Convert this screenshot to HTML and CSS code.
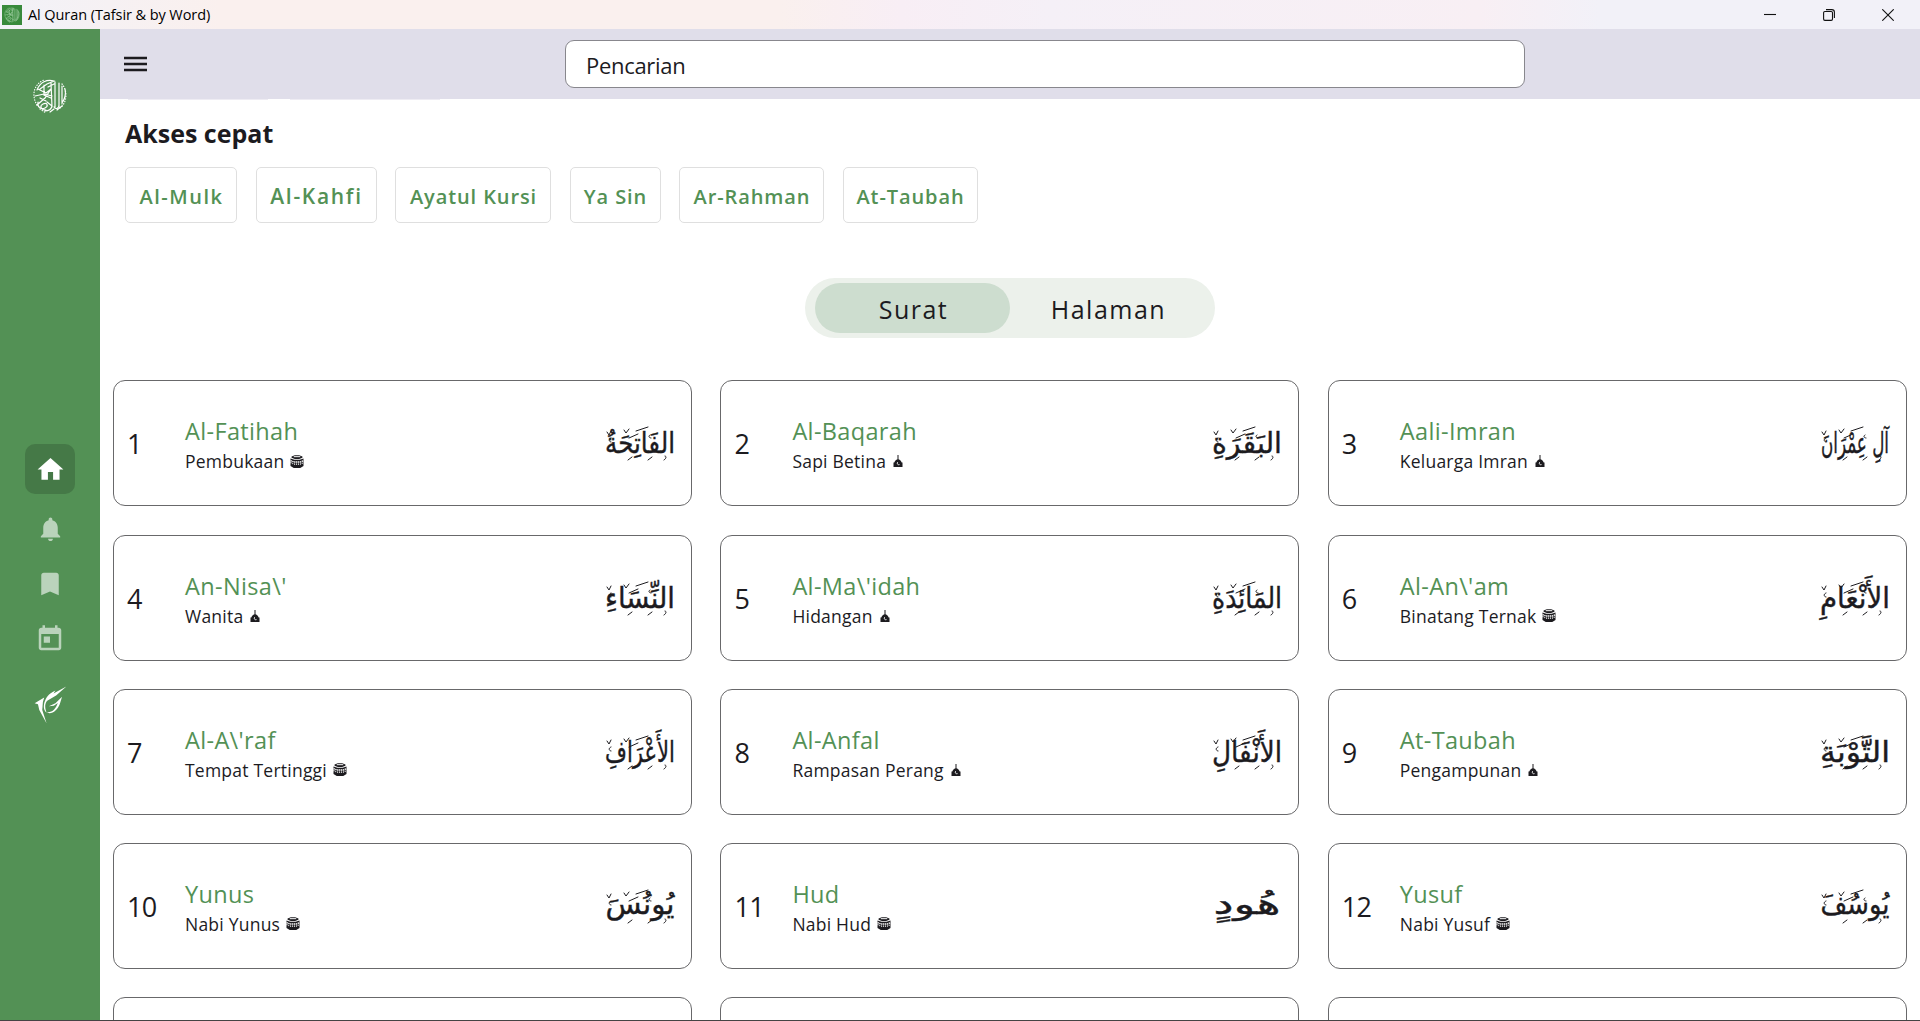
FILE: index.html
```html
<!DOCTYPE html>
<html lang="id">
<head>
<meta charset="utf-8">
<title>Al Quran (Tafsir &amp; by Word)</title>
<link rel="stylesheet" href="styles.css">
</head>
<body>
<svg class="defs" aria-hidden="true">
  <symbol id="kaaba" viewBox="0 0 12 12">
    <path fill="#1c1b1f" d="M1 1.300 4 .2h4l3 1.100v1.200L8 3.600H4L1 2.500z"/>
    <path fill="#fff" d="M3 1.100h6v.9H3z"/>
    <path fill="#1c1b1f" d="M0 3.200l3.500 1.200h5L12 3.200v7L9 12H3L0 10.200z"/>
    <path stroke="#fff" fill="none" stroke-width="1.300" stroke-dasharray="1.300 .5" d="M0 5.200 3 6.500h6l3-1.300"/>
    <path stroke="#fff" fill="none" stroke-width="1" stroke-dasharray="1 .8" d="M0 7 3 8.400h6l3-1.400"/>
  </symbol>
  <symbol id="dome" viewBox="0 0 9 12">
    <path fill="#1c1b1f" d="M4 0h1v4.300c1.600.8 2.700 1.600 3.200 3.200H9V12H0V7.500h.8C1.300 6 2.400 5 4 4.300z"/>
    <path stroke="#fff" fill="none" stroke-width=".9" d="M4.100 7.200c-.9 1.500.2 3 1.900 2.400"/>
  </symbol>
  <symbol id="calligraphy" viewBox="0 0 36 36">
    <g fill="none" stroke="currentColor" stroke-linecap="round" stroke-width="1.200">
      <path d="M5 12C8 4 15 1 22 3l-7 3-7 5M6 11l8 4 5-4-6 9-8 7M12 7v10l7 3M3 18l9-2 8 2M19 5l1 24M23 4v25M27 5v24M30 8v18M33 11c1 5 0 10-3 14M6 24c-1 5 3 8 7 6s2-6-2-4-2 6 3 6M15 24l5 4c-1 4-4 5-7 5M22 29c2 3 5 1 5-2M18 34l4-3M8 20l6 3M30 28l-5 4M16 9l6-3"/>
      <path stroke-dasharray=".4 2.200" d="M5 27C-1 17 2 6 12 2M30 6c6 7 5 19-2 24M8 31l6 4"/>
    </g>
  </symbol>
  <!-- small vowel and ornament marks around the surah names -->
  <symbol id="marks" viewBox="0 0 72 48">
    <g fill="none" stroke="#1c1b1f" stroke-width="1" stroke-linecap="round">
      <path d="M3 13l2 3 2-4M20 11l2 3 3-4M7 19c-3 1-2 4 0 4M32 12l12-4M25 19l9-4M46 16c-2 1-1 3 1 3M28 38l-4 3M48 38l-4 3M61 37c2 0 1 3-1 4"/>
    </g>
  </symbol>
</svg>
<div class="titlebar">
  <span class="app-icon"><svg viewBox="0 0 36 36"><use href="#calligraphy"/></svg></span>
  <span class="app-name">Al Quran (Tafsir &amp; by Word)</span>
  <div class="window-buttons">
    <svg viewBox="0 0 12 12"><path d="M0 5.500h12"/></svg>
    <svg viewBox="0 0 12 12"><rect x=".6" y="2.500" width="8.900" height="8.900" rx="1.300"/><path d="M3 .6h5.800a2.600 2.600 0 0 1 2.600 2.600V9"/></svg>
    <svg viewBox="0 0 12 12"><path d="M.3.3l11.400 11.400M11.700.3.3 11.700"/></svg>
  </div>
</div>
<div class="app">
  <nav class="sidebar">
    <svg class="brand" viewBox="0 0 36 36"><use href="#calligraphy"/></svg>
    <div class="nav-item active"><svg viewBox="0 0 24 24"><path d="M10 20v-6h4v6h5v-8h3L12 3 2 12h3v8z"/></svg></div>
    <div class="nav-item bell"><svg viewBox="0 0 24 24"><path d="M12 22c1.100 0 2-.9 2-2h-4c0 1.100.9 2 2 2zm6-6v-5c0-3.070-1.640-5.640-4.500-6.320V4c0-.83-.67-1.500-1.500-1.500s-1.500.67-1.500 1.500v.68C7.630 5.360 6 7.920 6 11v5l-2 2v1h16v-1l-2-2z"/></svg></div>
    <div class="nav-item mark"><svg viewBox="0 0 24 24"><path d="M17 3H7c-1.100 0-1.990.9-1.990 2L5 21l7-3 7 3V5c0-1.100-.9-2-2-2z"/></svg></div>
    <div class="nav-item date"><svg viewBox="0 0 24 24"><path d="M19 3h-1V1h-2v2H8V1H6v2H5c-1.110 0-1.990.9-1.990 2L3 19c0 1.100.89 2 2 2h14c1.100 0 2-.9 2-2V5c0-1.100-.9-2-2-2zm0 16H5V8h14v11zM7 10h5v5H7z"/></svg></div>
    <svg class="bird" viewBox="100 800 100 114"><path d="M102 852l29-18-4 14-2 24 13 40-22-40-4-17zM131 851c6-18 13-28 34-38l-6 9 39-21-31 27-27 16c-7 8-8 19-2 36-7-5-10-14-7-29zM145 861l20-9 20-20-7 23c-6 15-18 27-31 27l-9-3c18 2 29-12 34-28l-12 8z"/></svg>
  </nav>
  <main class="main">
    <header class="topbar">
      <svg class="menu" viewBox="0 0 24 16"><path d="M0 2h23M0 8h23M0 14h23"/></svg>
      <div class="search">Pencarian</div>
    </header>
    <div class="scroll-edge"><span></span><span></span></div>
    <h2 class="heading">Akses cepat</h2>
    <div class="chips">
      <span class="chip c1">Al-Mulk</span><span class="chip c2">Al-Kahfi</span><span class="chip c3">Ayatul Kursi</span><span class="chip c4">Ya Sin</span><span class="chip c5">Ar-Rahman</span><span class="chip c6">At-Taubah</span>
    </div>
    <div class="switch"><span class="tab selected">Surat</span><span class="tab">Halaman</span></div>
    <div class="grid">
      <article class="card"><span class="no">1</span><div class="info"><h3>Al-Fatihah</h3><p>Pembukaan <svg class="makki"><use href="#kaaba"/></svg></p></div><svg class="arabic"><use href="#marks"/><text x="36" y="34" textLength="70" lengthAdjust="spacingAndGlyphs">الفَاتِحَةُ</text></svg></article>
      <article class="card"><span class="no">2</span><div class="info"><h3>Al-Baqarah</h3><p>Sapi Betina <svg class="madani"><use href="#dome"/></svg></p></div><svg class="arabic"><use href="#marks"/><text x="36" y="34" textLength="70" lengthAdjust="spacingAndGlyphs">البَقَرَةِ</text></svg></article>
      <article class="card"><span class="no">3</span><div class="info"><h3>Aali-Imran</h3><p>Keluarga Imran <svg class="madani"><use href="#dome"/></svg></p></div><svg class="arabic"><use href="#marks"/><text x="36" y="34" textLength="68" lengthAdjust="spacingAndGlyphs">آلِ عِمْرَانَ</text></svg></article>
      <article class="card"><span class="no">4</span><div class="info"><h3>An-Nisa\'</h3><p>Wanita <svg class="madani"><use href="#dome"/></svg></p></div><svg class="arabic"><use href="#marks"/><text x="36" y="34" textLength="70" lengthAdjust="spacingAndGlyphs">النِّسَاءِ</text></svg></article>
      <article class="card"><span class="no">5</span><div class="info"><h3>Al-Ma\'idah</h3><p>Hidangan <svg class="madani"><use href="#dome"/></svg></p></div><svg class="arabic"><use href="#marks"/><text x="36" y="34" textLength="70" lengthAdjust="spacingAndGlyphs">المَائِدَةِ</text></svg></article>
      <article class="card"><span class="no">6</span><div class="info"><h3>Al-An\'am</h3><p>Binatang Ternak <svg class="makki"><use href="#kaaba"/></svg></p></div><svg class="arabic"><use href="#marks"/><text x="36" y="34" textLength="70" lengthAdjust="spacingAndGlyphs">الأَنْعَامِ</text></svg></article>
      <article class="card"><span class="no">7</span><div class="info"><h3>Al-A\'raf</h3><p>Tempat Tertinggi <svg class="makki"><use href="#kaaba"/></svg></p></div><svg class="arabic"><use href="#marks"/><text x="36" y="34" textLength="70" lengthAdjust="spacingAndGlyphs">الأَعْرَافِ</text></svg></article>
      <article class="card"><span class="no">8</span><div class="info"><h3>Al-Anfal</h3><p>Rampasan Perang <svg class="madani"><use href="#dome"/></svg></p></div><svg class="arabic"><use href="#marks"/><text x="36" y="34" textLength="70" lengthAdjust="spacingAndGlyphs">الأَنْفَالِ</text></svg></article>
      <article class="card"><span class="no">9</span><div class="info"><h3>At-Taubah</h3><p>Pengampunan <svg class="madani"><use href="#dome"/></svg></p></div><svg class="arabic"><use href="#marks"/><text x="36" y="34" textLength="70" lengthAdjust="spacingAndGlyphs">التَّوْبَةِ</text></svg></article>
      <article class="card"><span class="no">10</span><div class="info"><h3>Yunus</h3><p>Nabi Yunus <svg class="makki"><use href="#kaaba"/></svg></p></div><svg class="arabic"><use href="#marks"/><text x="36" y="32" textLength="69" lengthAdjust="spacingAndGlyphs">يُونُسَ</text></svg></article>
      <article class="card"><span class="no">11</span><div class="info"><h3>Hud</h3><p>Nabi Hud <svg class="makki"><use href="#kaaba"/></svg></p></div><svg class="arabic"><text x="36" y="32" textLength="67" lengthAdjust="spacingAndGlyphs">هُودٍ</text></svg></article>
      <article class="card"><span class="no">12</span><div class="info"><h3>Yusuf</h3><p>Nabi Yusuf <svg class="makki"><use href="#kaaba"/></svg></p></div><svg class="arabic"><use href="#marks"/><text x="36" y="32" textLength="69" lengthAdjust="spacingAndGlyphs">يُوسُفَ</text></svg></article>
      <article class="card"></article>
      <article class="card"></article>
      <article class="card"></article>
    </div>
  </main>
</div>
</body>
</html>
```
FILE: styles.css
```css
* { box-sizing: border-box; }
body {
  margin: 0;
  height: 1021px;
  display: flex;
  flex-direction: column;
  overflow: hidden;
  border-bottom: 1px solid #444;
  font-family: "Open Sans", "DejaVu Sans", sans-serif;
  color: #1c1b1f;
  background: #fff;
}
h2, h3, p { margin: 0; font-weight: 400; }
svg { display: block; flex: none; }
.defs { display: none; }

.titlebar {
  height: 29px;
  flex: none;
  display: flex;
  align-items: center;
  padding: 0 24px 0 2px;
  background: linear-gradient(90deg, #f2f2f8 0, #faf0ee 220px, #faf0ee 780px, #f8eef5 900px, #f5f0f7 1050px, #f8eff4 1480px, #f2f1f8 1600px);
}
.app-icon { width: 20px; height: 20px; padding: 2px; background: #388a3c; color: #a9d3ab; }
.app-icon svg { width: 16px; height: 16px; }
.app-name { margin-left: 6px; font-size: 14.500px; letter-spacing: -.08px; line-height: 29px; color: #000; }
.window-buttons { margin-left: auto; display: flex; gap: 47px; padding-right: 2px; }
.window-buttons svg { width: 12px; height: 12px; fill: none; stroke: #111; stroke-width: 1.100; }

.app { flex: 1; min-height: 0; display: flex; }
.sidebar {
  width: 100px;
  flex: none;
  display: flex;
  flex-direction: column;
  align-items: center;
  padding-top: 49px;
  color: #fff;
  background: #539155;
}
.brand { width: 36px; height: 36px; margin-bottom: 330px; }
.nav-item { width: 50px; height: 54.800px; display: grid; place-items: center; }
.nav-item svg { width: 30px; height: 30px; fill: #bad3bb; }
.nav-item.active { height: 50px; border-radius: 10px; background: #457947; margin-bottom: 8px; }
.nav-item.active svg { width: 31px; height: 31px; fill: #fff; }
.nav-item.bell svg { width: 29px; }
.bird { width: 33px; height: 38px; margin-top: 20px; fill: #fff; }

.main { flex: 1; min-width: 0; overflow: hidden; }
.topbar { height: 70px; display: flex; align-items: center; padding-left: 24px; background: #e0deea; }
.menu { width: 24px; height: 16px; fill: none; stroke: #1c1b1f; stroke-width: 2.400; }
.search {
  width: 960px;
  height: 48px;
  margin-left: 417px;
  padding-left: 20px;
  border: 1px solid #88878d;
  border-radius: 9px;
  background: #fff;
  font-size: 22px;
  letter-spacing: -.3px;
  line-height: 49px;
}
.scroll-edge { height: 1px; display: flex; gap: 22px; padding-left: 28px; }
.scroll-edge span { width: 140px; background: #eeecf3; }
.scroll-edge span + span { width: 150px; }
.heading { margin: 15px 0 0 25px; height: 36px; line-height: 36px; font-size: 25px; font-weight: 700; }

.chips { display: flex; margin: 16px 0 0 25px; }
.chip {
  height: 56px;
  margin-right: 18.500px;
  padding-left: 1px;
  border: 1px solid #dfdfdf;
  border-radius: 5px;
  color: #539155;
  font-size: 20px;
  font-weight: 600;
  letter-spacing: .9px;
  line-height: 57px;
  text-align: center;
  white-space: nowrap;
}
.c1 { width: 112px; letter-spacing: 1.500px; }
.c2 { width: 121px; font-size: 21px; letter-spacing: 1.700px; }
.c3 { width: 156px; }
.c4 { width: 91px; }
.c5 { width: 145px; }
.c6 { width: 135px; }

.switch {
  width: 410px;
  height: 60px;
  margin: 55px 0 0 705px;
  padding: 5px 10px;
  display: flex;
  border-radius: 30px;
  background: #ecf1eb;
}
.tab { width: 195px; padding-left: 2px; border-radius: 25px; font-size: 25px; line-height: 53px; letter-spacing: 1.500px; text-align: center; }
.tab.selected { background: #cdddcf; }

.grid {
  display: grid;
  grid-template-columns: repeat(3, 579px);
  grid-auto-rows: 126px;
  gap: 28.200px 28.400px;
  margin: 42.400px 0 0 13px;
}
.card { display: flex; align-items: center; padding: 0 15px 0 13px; border: 1px solid #68686a; border-radius: 12px; }
.no { width: 58px; font-size: 27px; line-height: 36px; padding-top: 2px; letter-spacing: -.6px; }
.info { padding-top: 5px; }
.info h3 { height: 31px; line-height: 31px; font-size: 23.500px; letter-spacing: .35px; color: #539155; }
.info p { height: 28px; display: flex; align-items: center; font-size: 17.500px; letter-spacing: .23px; line-height: 28px; white-space: nowrap; }
.makki { width: 14px; height: 13px; margin-left: 6px; }
.madani { width: 10px; height: 12px; margin-left: 7px; }
.arabic { width: 72px; height: 48px; margin-left: auto; overflow: visible; }
.arabic text { font-family: "DejaVu Sans", sans-serif; font-size: 29px; text-anchor: middle; fill: #1c1b1f; stroke: #1c1b1f; stroke-width: .4px; direction: rtl; }
```
